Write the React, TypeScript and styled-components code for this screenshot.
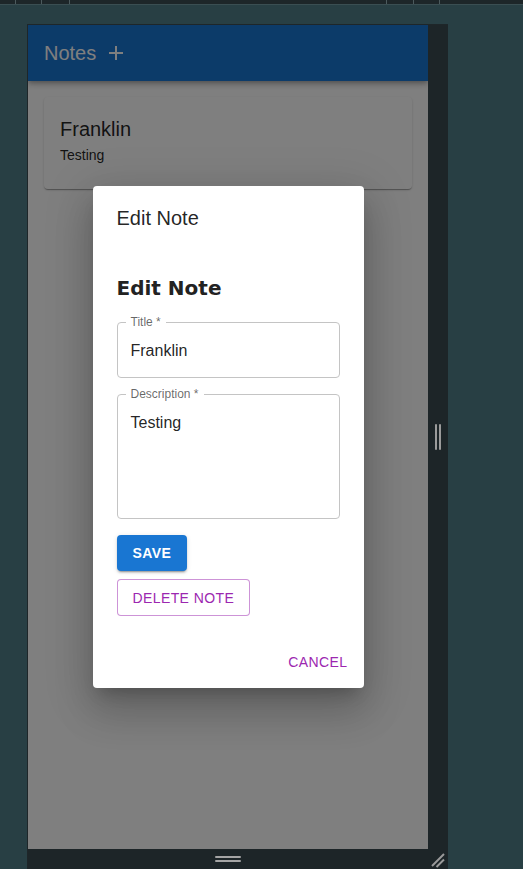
import React from "react";
import styled, { createGlobalStyle } from "styled-components";

const Global = createGlobalStyle`
  html, body { margin: 0; padding: 0; background: #283f44; }
  body { font-family: "Liberation Sans", Arial, sans-serif; }
  * { box-sizing: border-box; }
`;

const Page = styled.div`
  width: 523px;
  height: 869px;
  overflow: hidden;
  display: flex;
  flex-direction: column;
  background: #283f44;
`;

const RulerSvg = styled.svg`
  display: block;
  flex: none;
`;

const Stage = styled.div`
  flex: 1;
  padding: 19px 0 0 27px;
`;

const Frame = styled.div`
  display: grid;
  grid-template-columns: 400px 20px;
  grid-template-rows: 824px 20px;
  width: 421px;
  border-top: 1px solid #1e2629;
  border-left: 1px solid #1e2629;
  background: #1d2528;
`;

const Screen = styled.div`
  position: relative;
  overflow: hidden;
  background: #ffffff;
  display: flex;
  flex-direction: column;
`;

const AppBar = styled.header`
  height: 56px;
  flex: none;
  display: flex;
  align-items: center;
  padding: 0 16px;
  background: #1976d2;
  color: #ffffff;
  box-shadow: 0 2px 4px -1px rgba(0,0,0,0.2), 0 4px 5px 0 rgba(0,0,0,0.14), 0 1px 10px 0 rgba(0,0,0,0.12);
  position: relative;
  z-index: 1;
`;

const BarTitle = styled.div`
  font-size: 20px;
  line-height: 32px;
  font-weight: 500;
`;

const IconButton = styled.button`
  border: 0;
  background: transparent;
  color: inherit;
  padding: 8px;
  display: flex;
  border-radius: 50%;
`;

const Main = styled.main`
  padding: 16px;
`;

const Card = styled.div`
  background: #ffffff;
  border-radius: 4px;
  padding: 16px 16px 24px;
  color: rgba(0,0,0,0.87);
  box-shadow: 0 2px 1px -1px rgba(0,0,0,0.2), 0 1px 1px 0 rgba(0,0,0,0.14), 0 1px 3px 0 rgba(0,0,0,0.12);
`;

const CardTitle = styled.div`
  font-size: 20px;
  line-height: 32px;
`;

const CardText = styled.div`
  font-size: 14px;
  line-height: 20px;
`;

const Overlay = styled.div`
  position: absolute;
  inset: 0;
  z-index: 2;
  background: rgba(0,0,0,0.5);
  display: flex;
  align-items: center;
  justify-content: center;
`;

const Dialog = styled.div`
  width: 271px;
  background: #ffffff;
  border-radius: 4px;
  display: flex;
  flex-direction: column;
  color: rgba(0,0,0,0.87);
  box-shadow: 0 11px 15px -7px rgba(0,0,0,0.2), 0 24px 38px 3px rgba(0,0,0,0.14), 0 9px 46px 8px rgba(0,0,0,0.12);
`;

const DialogTitle = styled.h2`
  margin: 0;
  padding: 16px 24px;
  font-size: 20px;
  line-height: 32px;
  font-weight: 400;
`;

const DialogContent = styled.div`
  padding: 0 24px 20px;
  display: flex;
  flex-direction: column;
  align-items: flex-start;
`;

const Heading = styled.h3`
  margin: 25px 0 21px;
  font-family: "DejaVu Sans", Verdana, sans-serif;
  font-weight: 700;
  font-size: 20px;
  line-height: 26px;
  color: #222222;
`;

const Field = styled.div<{ $rows?: number }>`
  position: relative;
  width: 100%;
  border: 1px solid #c4c4c4;
  border-radius: 4px;
  padding: 15.5px 13px;
  min-height: ${(p) => 33 + 23 * (p.$rows ?? 1)}px;
  & + & { margin-top: 16px; }
`;

const FieldLabel = styled.span`
  position: absolute;
  top: -7px;
  left: 8px;
  padding: 0 5px;
  background: #ffffff;
  font-size: 12px;
  line-height: 12px;
  color: rgba(0,0,0,0.6);
`;

const FieldValue = styled.div`
  font-size: 16px;
  line-height: 23px;
  color: rgba(0,0,0,0.87);
`;

const Button = styled.button<{ $variant: "contained" | "outlined" | "text" }>`
  font-family: "Liberation Sans", Arial, sans-serif;
  font-size: 14px;
  font-weight: ${(p) => (p.$variant === "contained" ? 700 : 400)};
  letter-spacing: 0.4px;
  text-transform: uppercase;
  line-height: 24px;
  border-radius: 4px;
  cursor: pointer;
  ${(p) =>
    p.$variant === "contained"
      ? `background:#1976d2;color:#fff;border:0;padding:6px 16px;margin-top:16px;
         box-shadow:0 3px 1px -2px rgba(0,0,0,0.2),0 2px 2px 0 rgba(0,0,0,0.14),0 1px 5px 0 rgba(0,0,0,0.12);`
      : p.$variant === "outlined"
      ? `background:#fff;color:#9c27b0;border:1px solid rgba(156,39,176,0.5);padding:5.5px 15px;margin-top:8px;`
      : `background:transparent;color:#9c27b0;border:0;padding:6px 8px;`}
`;

const DialogActions = styled.div`
  padding: 8px;
  display: flex;
  justify-content: flex-end;
`;

const SideStrip = styled.div`
  display: flex;
  align-items: center;
  justify-content: center;
  gap: 2px;
`;

const VBar = styled.span`
  width: 2px;
  height: 26px;
  background: #9b9b9b;
  border-radius: 1px;
`;

const BottomStrip = styled.div`
  display: flex;
  flex-direction: column;
  align-items: center;
  justify-content: center;
  gap: 2px;
`;

const HBar = styled.span`
  width: 26px;
  height: 2px;
  background: #a5a5a5;
  border-radius: 1px;
`;

const Corner = styled.div`
  display: flex;
`;

const ticks = [15, 41, 69, 386, 413, 439];

export default function App() {
  return (
    <Page>
      <Global />
      <RulerSvg width="523" height="5" viewBox="0 0 523 5">
        <rect x="0" y="0" width="523" height="4" fill="#1d2629" />
        <rect x="0" y="4" width="523" height="1" fill="#3a4e52" />
        {ticks.map((t) => (
          <rect key={t} x={t} y="0" width="1" height="4" fill="#4c5a5d" />
        ))}
      </RulerSvg>
      <Stage>
        <Frame>
          <Screen>
            <AppBar>
              <BarTitle>Notes</BarTitle>
              <IconButton aria-label="add">
                <svg width="24" height="24" viewBox="0 0 24 24" fill="currentColor">
                  <path d="M19 13h-6v6h-2v-6H5v-2h6V5h2v6h6v2z" />
                </svg>
              </IconButton>
            </AppBar>
            <Main>
              <Card>
                <CardTitle>Franklin</CardTitle>
                <CardText>Testing</CardText>
              </Card>
            </Main>
            <Overlay>
              <Dialog>
                <DialogTitle>Edit Note</DialogTitle>
                <DialogContent>
                  <Heading>Edit Note</Heading>
                  <Field>
                    <FieldLabel>Title *</FieldLabel>
                    <FieldValue>Franklin</FieldValue>
                  </Field>
                  <Field $rows={4}>
                    <FieldLabel>Description *</FieldLabel>
                    <FieldValue>Testing</FieldValue>
                  </Field>
                  <Button $variant="contained">Save</Button>
                  <Button $variant="outlined">Delete Note</Button>
                </DialogContent>
                <DialogActions>
                  <Button $variant="text">Cancel</Button>
                </DialogActions>
              </Dialog>
            </Overlay>
          </Screen>
          <SideStrip>
            <VBar />
            <VBar />
          </SideStrip>
          <BottomStrip>
            <HBar />
            <HBar />
          </BottomStrip>
          <Corner>
            <svg width="20" height="20" viewBox="0 0 20 20">
              <line x1="4" y1="17" x2="16" y2="5" stroke="#9a9a9a" strokeWidth="2" />
              <line x1="8.5" y1="18" x2="16" y2="10.5" stroke="#9a9a9a" strokeWidth="2" />
            </svg>
          </Corner>
        </Frame>
      </Stage>
    </Page>
  );
}
